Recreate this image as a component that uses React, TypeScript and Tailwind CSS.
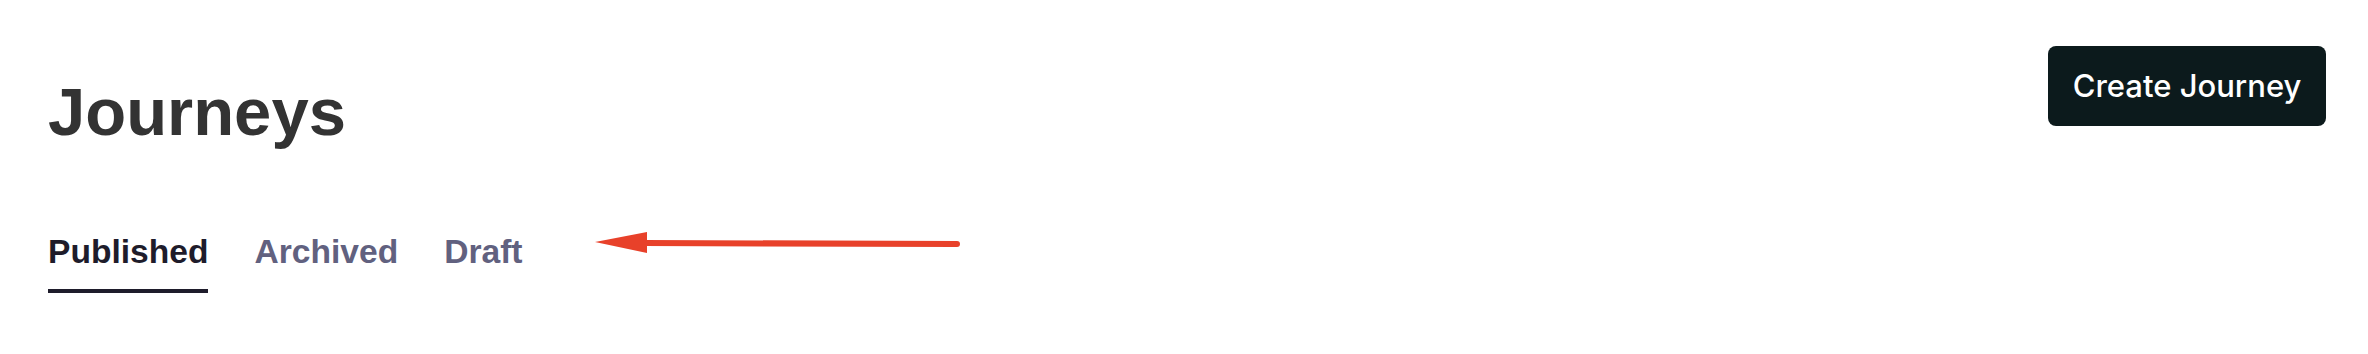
const TABS = [
  { label: 'Published', active: true },
  { label: 'Archived', active: false },
  { label: 'Draft', active: false },
];

export default function App() {
  return (
    <div className="relative h-[354px] w-full bg-white pl-12 pr-[42px] pt-[46px] font-['Liberation_Sans',Arial,sans-serif]">
      <div className="flex items-start justify-between">
        <h1 className="mt-[32px] text-[67px] leading-none font-bold text-[#333333]">Journeys</h1>
        <button
          type="button"
          className="flex h-20 w-[278px] items-center justify-center rounded-lg bg-[#0c1a1c] font-['Inter',sans-serif] text-[31px] font-medium text-white"
        >
          Create Journey
        </button>
      </div>

      <nav className="mt-[90px] flex gap-[46px]">
        {TABS.map((t) => (
          <div
            key={t.label}
            className={
              t.active
                ? 'border-b-4 border-[#1e1c2b] pb-5 text-[33.6px] leading-none font-bold text-[#1e1c2b]'
                : 'border-b-4 border-transparent pb-5 text-[33.6px] leading-none font-bold text-[#61617f]'
            }
          >
            {t.label}
          </div>
        ))}
      </nav>

      {/* annotation arrow */}
      <svg className="absolute top-[220px] left-[590px]" width="380" height="44" viewBox="0 0 380 44">
        <line x1="55" y1="23" x2="367" y2="24" stroke="#e8412a" strokeWidth="6" strokeLinecap="round" />
        <polygon points="5,22 57,12 57,33" fill="#e8412a" />
      </svg>
    </div>
  );
}
